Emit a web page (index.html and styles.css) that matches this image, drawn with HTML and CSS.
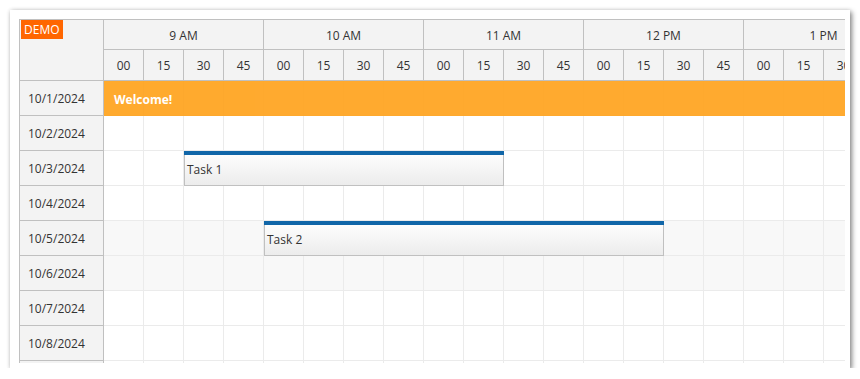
FILE: index.html
```html
<!DOCTYPE html>
<html>
<head>
<meta charset="utf-8">
<link rel="stylesheet" href="styles.css">
</head>
<body>
<div class="frame">
  <div class="scheduler">
    <div class="rowheaders">
      <div class="corner"><span class="demo">DEMO</span></div>
      <div class="rh">10/1/2024</div>
      <div class="rh">10/2/2024</div>
      <div class="rh">10/3/2024</div>
      <div class="rh">10/4/2024</div>
      <div class="rh">10/5/2024</div>
      <div class="rh">10/6/2024</div>
      <div class="rh">10/7/2024</div>
      <div class="rh">10/8/2024</div>
      <div class="rh"></div>
    </div>
    <div class="timeline">
      <div class="inner">
        <div class="hours">
          <div class="hour">9 AM</div>
          <div class="hour">10 AM</div>
          <div class="hour">11 AM</div>
          <div class="hour">12 PM</div>
          <div class="hour">1 PM</div>
        </div>
        <div class="minutes">
          <div class="min">00</div><div class="min">15</div><div class="min">30</div><div class="min">45</div>
          <div class="min">00</div><div class="min">15</div><div class="min">30</div><div class="min">45</div>
          <div class="min">00</div><div class="min">15</div><div class="min">30</div><div class="min">45</div>
          <div class="min">00</div><div class="min">15</div><div class="min">30</div><div class="min">45</div>
          <div class="min">00</div><div class="min">15</div><div class="min">30</div>
        </div>
        <div class="body">
          <div class="row"></div>
          <div class="row"></div>
          <div class="row"></div>
          <div class="row"></div>
          <div class="row weekend"></div>
          <div class="row weekend"></div>
          <div class="row"></div>
          <div class="row"></div>
          <div class="row"></div>
          <div class="event welcome">Welcome!</div>
          <div class="event task task1"><div class="bar"></div><div class="etext">Task 1</div></div>
          <div class="event task task2"><div class="bar"></div><div class="etext">Task 2</div></div>
        </div>
      </div>
    </div>
  </div>
</div>
</body>
</html>
```

FILE: styles.css
```css
* { box-sizing: border-box; }
html, body { margin: 0; padding: 0; background: #fff; }
body {
  font-family: "Open Sans", "Liberation Sans", sans-serif;
  font-size: 12px;
  color: #333;
}
.frame {
  margin: 10px 0 0 10px;
  width: 840px;
  height: 358px;
  padding: 9px 5px 5px 9px;
  background: #fff;
  box-shadow: 2px 2px 5px rgba(0,0,0,0.45), 0 0 4px rgba(0,0,0,0.12);
}
.scheduler {
  display: flex;
  width: 826px;
  height: 344px;
  border-left: 1px solid #c0c0c0;
  border-top: 1px solid #c0c0c0;
  overflow: hidden;
}
.rowheaders {
  width: 84px;
  flex: none;
  background: #f3f3f3;
  border-right: 1px solid #c0c0c0;
}
.corner {
  position: relative;
  height: 61px;
  border-bottom: 1px solid #c0c0c0;
}
.demo {
  position: absolute;
  left: 1px;
  top: 0;
  height: 19px;
  padding: 0 3px;
  line-height: 19px;
  background: #ff6600;
  color: #fff;
  font-size: 12px;
}
.rh {
  height: 35px;
  border-bottom: 1px solid #c0c0c0;
  display: flex;
  align-items: center;
  padding-left: 8px;
}
.timeline {
  flex: 1;
  overflow: hidden;
}
.inner { width: 760px; }
.hours, .minutes { display: flex; background: #f3f3f3; }
.hour {
  width: 160px;
  flex: none;
  height: 30px;
  border-right: 1px solid #c0c0c0;
  border-bottom: 1px solid #c0c0c0;
  display: flex;
  align-items: center;
  justify-content: center;
  padding-top: 1px;
}
.minutes { width: 800px; }
.min {
  width: 40px;
  flex: none;
  height: 31px;
  border-right: 1px solid #c0c0c0;
  border-bottom: 1px solid #c0c0c0;
  display: flex;
  align-items: center;
  justify-content: center;
}
.body { position: relative; }
.row {
  height: 35px;
  border-bottom: 1px solid #ebebeb;
  background-image: repeating-linear-gradient(to right, transparent 0 39px, #ebebeb 39px 40px);
}
.row.weekend { background-color: #f8f8f8; }
.event { position: absolute; }
.welcome {
  left: 0;
  top: 0;
  width: 760px;
  height: 35px;
  background: #ffa41f;
  opacity: 0.93;
  color: #fff;
  font-weight: bold;
  display: flex;
  align-items: center;
  padding-left: 10px;
  padding-top: 1px;
}
.task {
  height: 35px;
  border: 1px solid #c0c0c0;
  border-top: none;
  background: linear-gradient(#ffffff, #ececec);
  display: flex;
  flex-direction: column;
}
.task1 { top: 70px; left: 80px; width: 320px; }
.task2 { top: 140px; left: 160px; width: 400px; }
.bar { height: 4px; background: #1066a8; margin: 0 -1px; flex: none; }
.etext {
  flex: 1;
  display: flex;
  align-items: center;
  padding-left: 2px;
  padding-bottom: 1px;
  color: #333;
}
```
